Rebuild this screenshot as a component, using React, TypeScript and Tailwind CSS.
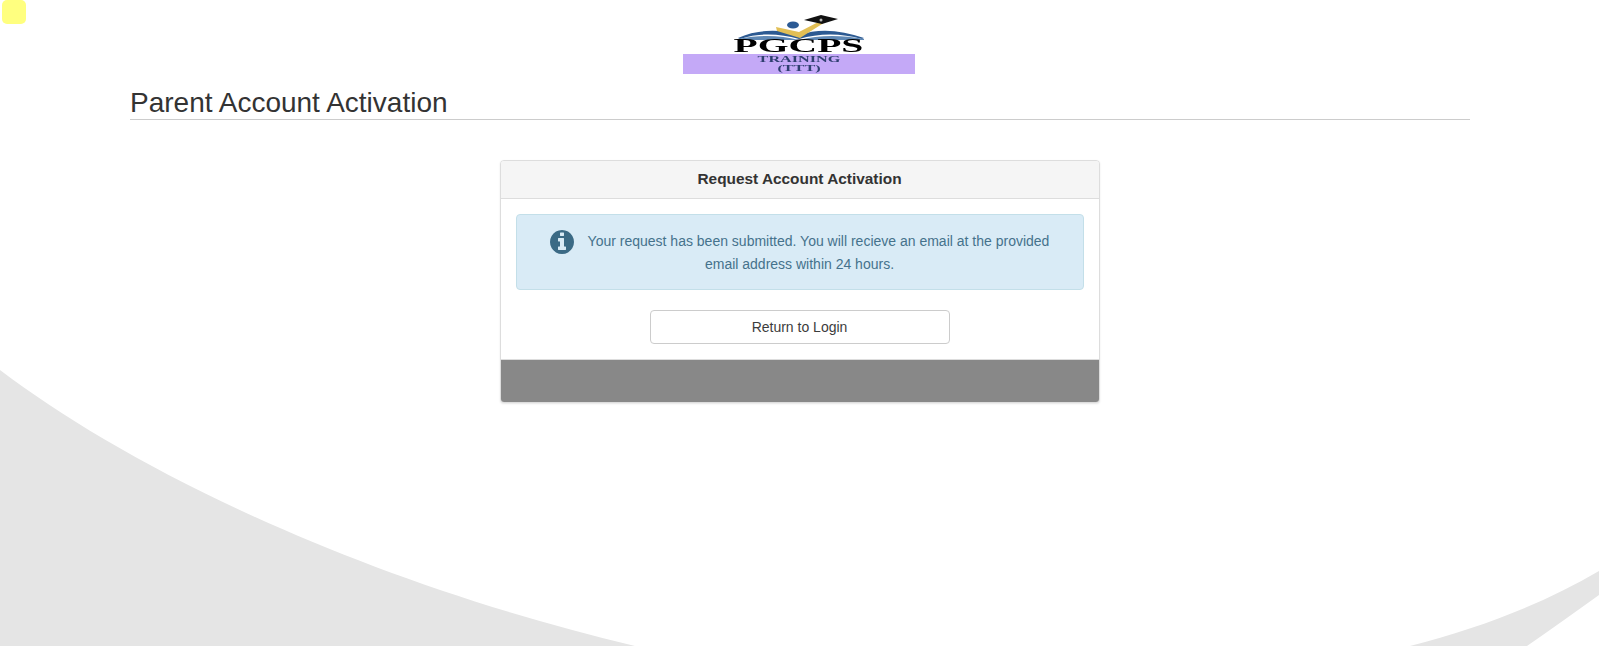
function Logo() {
  return (
    <div className="flex flex-col items-center w-[232px] h-[75px] pt-[15px] mr-[1px] blur-[0.6px]">
      <svg width="132" height="25" viewBox="0 0 132 25" className="block">
        <path d="M5 23 C22 15 46 13 66 20 C86 13 108 15 131 23 L129 24 C108 18 86 18 66 24 C46 18 24 18 7 24 Z" fill="#2c5a92" />
        <path d="M5 24 C26 20 46 20 66 25 C86 20 108 20 131 24 L131 25 L5 25 Z" fill="#5f88b4" />
        <ellipse cx="60" cy="10" rx="6" ry="3.5" fill="#2b5a94" />
        <path d="M43 12 L66 17 L93 3 L97 4 L67 23 L44 16 Z" fill="#e2bf55" />
        <path d="M71 5 L88 0 L105 4 L89 9 Z" fill="#111" />
        <circle cx="88" cy="5" r="1.5" fill="#bbb" />
      </svg>
      <div className="h-[13px] mb-[1px] flex items-center font-['Liberation_Serif'] font-bold text-[18px] leading-[13px] text-black scale-x-[2.2]">
        PGCPS
      </div>
      <div className="w-[232px] h-[20px] bg-[#c4a9f7] flex flex-col items-center font-['Liberation_Serif'] font-bold text-[9px] leading-[9px] text-[#2f3f70] pt-[1px]">
        <span className="scale-x-[1.8]">TRAINING</span>
        <span className="scale-x-[1.8]">(TTT)</span>
      </div>
    </div>
  );
}

export default function App() {
  return (
    <div className="relative h-[646px] overflow-hidden bg-white font-['Liberation_Sans',sans-serif] text-[14px] text-[#333]">
      {/* swoosh behind the page */}
      <svg className="absolute inset-0" width="1599" height="646" viewBox="0 0 1599 646">
        <path d="M0 370 C125 465 350 578 635 646 L0 646 Z" fill="#e5e5e5" />
        <path d="M1410 646 C1480 628 1545 603 1599 571 L1599 595 C1575 612 1550 630 1527 646 Z" fill="#e5e5e5" />
      </svg>
      <div className="absolute left-[2px] top-0 w-[24px] h-[24px] rounded-[5px] bg-[#ffff7f]" />

      <div className="relative flex flex-col items-center">
        <Logo />
        <div className="w-[1340px] ml-[1px] mt-[12px] border-b border-[#ccc] h-[33px] text-[28px] leading-[32px] text-[#333]">
          Parent Account Activation
        </div>

        <div className="w-[600px] mt-[40px] rounded-[4px] border border-[#ddd] bg-white shadow-[0_1px_2px_rgba(0,0,0,0.1)] overflow-hidden">
          <div className="h-[38px] flex items-center justify-center bg-[#f5f5f5] border-b border-[#ddd] text-[15.4px] font-bold pb-[1px]">
            Request Account Activation
          </div>
          <div className="p-[15px]">
            <div className="h-[76px] rounded-[4px] border border-[#c3dfe9] bg-[#d9ebf6] text-[#45728c] px-[33px] pt-[15px] text-center leading-[23px]">
              {/* float height stays under one line so only the first line is pushed over */}
              <span className="float-left w-[38px] h-[23px]">
                <svg width="24" height="24" viewBox="0 128 1536 1536" fill="#3b6a85" className="block">
                  <path d="M1024 1376v-160q0-14-9-23t-23-9h-96v-512q0-14-9-23t-23-9h-320q-14 0-23 9t-9 23v160q0 14 9 23t23 9h96v320h-96q-14 0-23 9t-9 23v160q0 14 9 23t23 9h448q14 0 23-9t9-23zm-128-896v-160q0-14-9-23t-23-9h-192q-14 0-23 9t-9 23v160q0 14 9 23t23 9h192q14 0 23-9t9-23zm640 416q0 209-103 385.5t-279.5 279.5-385.5 103-385.5-103-279.5-279.5-103-385.5 103-385.5 279.5-279.5 385.5-103 385.5 103 279.5 279.5 103 385.5z" />
                </svg>
              </span>
              Your request has been submitted. You will recieve an email at the provided email address within 24 hours.
            </div>
            <button className="block mx-auto mt-[20px] w-[300px] h-[34px] rounded-[4px] border border-[#ccc] bg-white text-[#3c3c3c]">
              Return to Login
            </button>
          </div>
          <div className="h-[43px] bg-[#888] border-t border-[#ddd]" />
        </div>
      </div>
    </div>
  );
}
